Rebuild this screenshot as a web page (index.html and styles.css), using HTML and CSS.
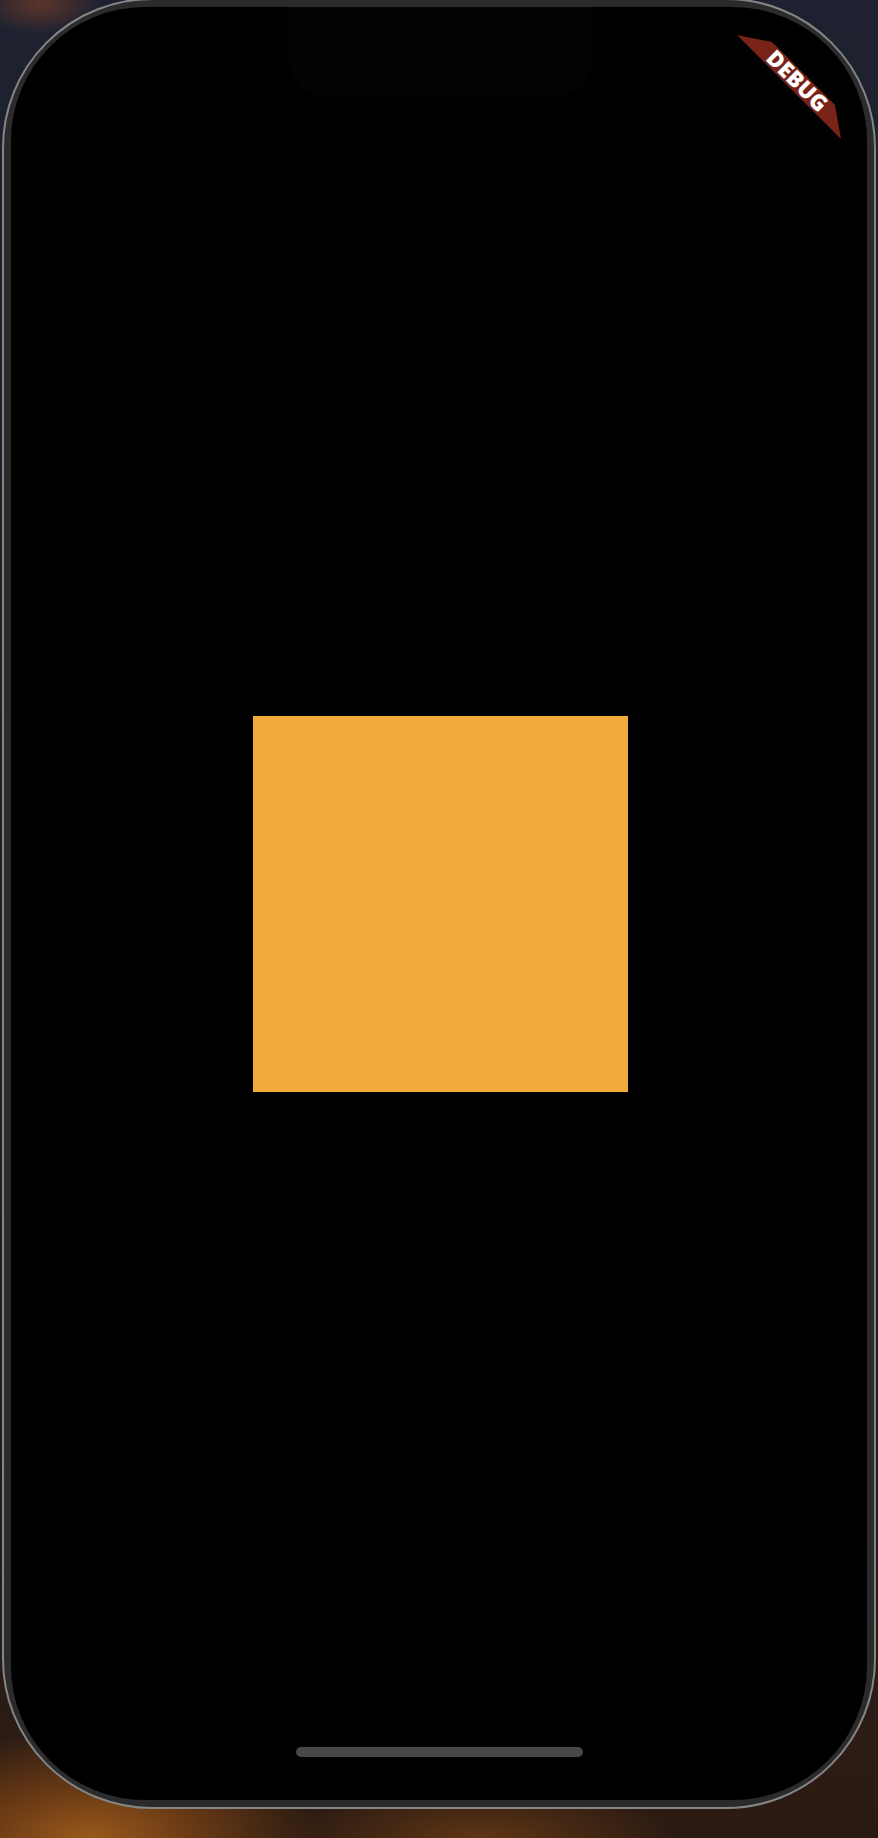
FILE: index.html
```html
<!DOCTYPE html>
<html lang="en">
<head>
<meta charset="utf-8">
<title>App</title>
<link rel="stylesheet" href="styles.css">
</head>
<body>
<div class="page">
  <div class="device">
    <div class="screen">
      <div class="notch"></div>
      <div class="box"></div>
      <svg class="banner" width="140" height="150" viewBox="0 0 140 150">
        <polygon points="10,28 45,35 108,98 114,132" fill="#782218"/>
        <text x="71" y="73" transform="rotate(45 71 73)" text-anchor="middle" dominant-baseline="central" class="banner-text">DEBUG</text>
      </svg>
      <div class="home"></div>
    </div>
  </div>
</div>
</body>
</html>
```

FILE: styles.css
```css
html, body {
  margin: 0;
  padding: 0;
}
body {
  width: 878px;
  height: 1838px;
  overflow: hidden;
}
.page {
  width: 878px;
  height: 1838px;
  overflow: hidden;
  background:
    radial-gradient(ellipse 60px 30px at 40px 4px, rgba(120,60,40,0.7), rgba(120,60,40,0) 100%),
    radial-gradient(ellipse 230px 110px at 90px 1840px, #9a5a1c 0%, #6a3a14 45%, rgba(60,30,12,0) 100%),
    radial-gradient(ellipse 200px 60px at 480px 1840px, rgba(110,60,20,0.8), rgba(60,30,12,0) 100%),
    linear-gradient(to bottom, #1e2230 0%, #1c1e28 50%, #1e1a1c 80%, #2c1c14 95%, #2a1a12 100%);
}
.device {
  box-sizing: border-box;
  width: 874px;
  height: 1811px;
  margin: -2px 0 0 2px;
  padding: 7px;
  border: 2px solid #858585;
  border-radius: 150px;
  background: #2b2b2b;
}
.screen {
  position: relative;
  height: 100%;
  background: #000;
  border-radius: 134px;
  overflow: hidden;
  display: flex;
  align-items: center;
  justify-content: center;
}
.box {
  width: 375px;
  height: 376px;
  background: #f2a93b;
  margin-left: 2px;
}
.notch {
  position: absolute;
  top: 0;
  left: 277px;
  width: 305px;
  height: 90px;
  background: #030303;
  border-radius: 0 0 40px 40px;
}
.banner {
  position: absolute;
  top: 0;
  right: 0;
}
.banner-text {
  font-family: "Open Sans", "DejaVu Sans", sans-serif;
  font-weight: 800;
  font-size: 22px;
  fill: #ffffff;
}
.home {
  position: absolute;
  left: 0;
  right: 0;
  bottom: 43px;
  margin: 0 auto;
  width: 287px;
  height: 10px;
  border-radius: 5px;
  background: #474747;
}
```
